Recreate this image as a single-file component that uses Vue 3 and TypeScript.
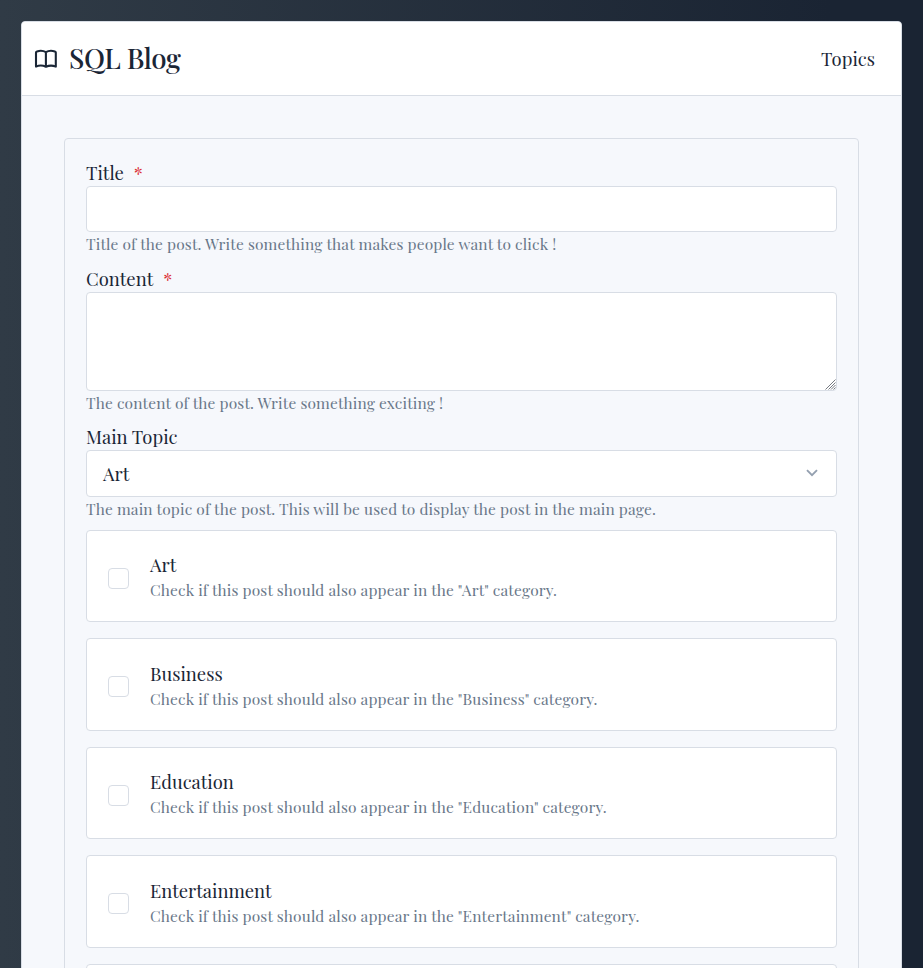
<script setup lang="ts">
interface Topic {
  name: string
}

const topics: Topic[] = [
  { name: 'Art' },
  { name: 'Business' },
  { name: 'Education' },
  { name: 'Entertainment' },
]
</script>

<template>
  <div class="page">
    <div class="shell">
      <header class="header">
        <a class="brand">
          <svg class="book" viewBox="0 0 24 24" fill="none" stroke="currentColor" stroke-width="2.1" stroke-linecap="round" stroke-linejoin="round">
            <path d="M11.9 5.2C9.6 3.8 5.8 3.6 3 4.4Q2 4.7 2 5.6V19.6C5 18.3 9 18.4 11.9 19.8C14.8 18.4 18.7 18.3 21.8 19.6V5.6Q21.8 4.7 20.8 4.4C18 3.6 14.2 3.8 11.9 5.2V19.8" />
          </svg>
          <span class="brand-name">SQL Blog</span>
        </a>
        <nav><a class="nav-link">Topics</a></nav>
      </header>
      <main class="main">
        <form class="form">
          <div class="field">
            <label class="label">Title<span class="required">*</span></label>
            <input class="input" type="text" />
            <p class="help">Title of the post. Write something that makes people want to click !</p>
          </div>
          <div class="field">
            <label class="label">Content<span class="required">*</span></label>
            <div class="area-wrap">
              <textarea class="input area"></textarea>
              <svg class="grip" viewBox="0 0 11 11" fill="none" stroke="#777b82" stroke-width="1">
                <path d="M0.5 10.5l10-10M3.5 10.5l7-7M6 10.5l4.5-4.5M8.5 10.5l2-2" />
              </svg>
            </div>
            <p class="help">The content of the post. Write something exciting !</p>
          </div>
          <div class="field">
            <label class="label">Main Topic</label>
            <div class="input select">
              <span>Art</span>
              <svg class="chevron" viewBox="0 0 12 8" fill="none" stroke="currentColor" stroke-width="1.9"><path d="M1 1.2l5 5 5-5" /></svg>
            </div>
            <p class="help">The main topic of the post. This will be used to display the post in the main page.</p>
          </div>
          <div class="cards">
            <div v-for="t in topics" :key="t.name" class="card">
              <span class="check"></span>
              <div class="card-text">
                <div class="card-title">{{ t.name }}</div>
                <div class="card-help">Check if this post should also appear in the "{{ t.name }}" category.</div>
              </div>
            </div>
            <div class="card"></div>
          </div>
        </form>
      </main>
    </div>
  </div>
</template>

<style>
body {
  margin: 0;
  overflow: hidden;
}
</style>

<style scoped>
* {
  box-sizing: border-box;
}
.page {
  height: 968px;
  overflow: hidden;
  padding: 21px 21px 0;
  background: linear-gradient(to right, #303b46, #1a2433 90%);
  font-family: "Playfair Display", "Liberation Serif", serif;
  font-size: 18.45px;
  color: #1a2636;
}
.shell {
  height: 1100px;
  border: 1px solid #d8dde5;
  border-radius: 4px;
  background: #f6f8fc;
  overflow: hidden;
}
.header {
  height: 74px;
  display: flex;
  align-items: center;
  justify-content: space-between;
  padding: 0 26px 0 12px;
  background: #fff;
  border-bottom: 1px solid #d8dde5;
}
.brand {
  display: flex;
  align-items: center;
  gap: 11px;
}
.book {
  width: 24px;
  height: 24px;
}
.brand-name {
  margin-top: -1px;
  font-size: 27.7px;
  font-weight: 500;
  line-height: 40px;
  letter-spacing: -0.4px;
}
.nav-link {
  display: block;
  margin-top: -1px;
}
.main {
  padding: 42px;
}
.form {
  height: 1000px;
  padding: 21px;
  border: 1px solid #d8dde5;
  border-radius: 4px;
}
.field {
  margin-bottom: 8px;
}
.field + .field {
  margin-bottom: 7px;
}
.label {
  display: flex;
  height: 26px;
  line-height: 26px;
}
.required {
  margin-left: 10px;
  color: #dc2f35;
}
.input {
  display: block;
  width: 100%;
  height: 46px;
  border: 1px solid #d8dde5;
  border-radius: 4px;
  background: #fff;
  outline: none;
}
.area-wrap {
  position: relative;
}
.area {
  height: 99px;
  resize: none;
}
.grip {
  position: absolute;
  right: 1px;
  bottom: 1px;
  width: 11px;
  height: 11px;
}
.select {
  display: flex;
  align-items: center;
  justify-content: space-between;
  height: 47px;
  padding: 0 18px 0 16px;
}
.chevron {
  width: 12px;
  height: 8px;
  margin-top: -2px;
  color: #94a0b0;
}
.help {
  margin: 0;
  height: 26px;
  line-height: 23px;
  font-size: 15.5px;
  letter-spacing: 0.14px;
  color: #697789;
}
.cards {
  display: flex;
  flex-direction: column;
  gap: 16px;
}
.card {
  display: flex;
  align-items: center;
  flex: none;
  height: 92.4px;
  padding: 4.6px 21px 0;
  border: 1px solid #d8dde5;
  border-radius: 4px;
  background: #fff;
}
.check {
  width: 21px;
  height: 21px;
  margin-right: 21px;
  border: 1px solid #d8dde5;
  border-radius: 4px;
}
.card-title {
  height: 25px;
  line-height: 23px;
}
.card-help {
  height: 25px;
  line-height: 23px;
  font-size: 15.5px;
  letter-spacing: 0.14px;
  color: #697789;
}
</style>
